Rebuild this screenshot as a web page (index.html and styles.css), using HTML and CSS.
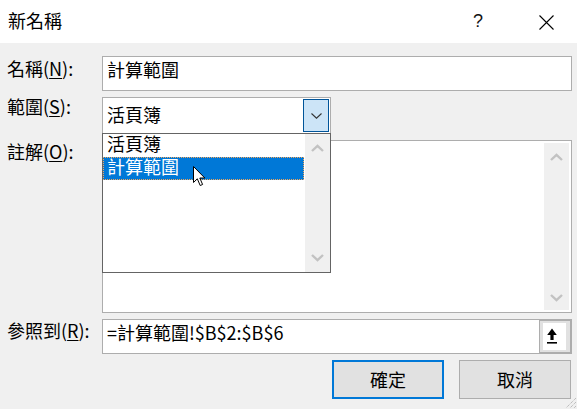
FILE: index.html
```html
<!DOCTYPE html>
<html lang="zh-Hant">
<head>
<meta charset="utf-8">
<title>新名稱</title>
<link rel="stylesheet" href="styles.css">
</head>
<body>
<div class="dialog">
  <div class="titlebar">
    <span class="title">新名稱</span>
    <span class="help">?</span>
    <svg class="close" width="15" height="15" viewBox="0 0 15 15"><path d="M0.5 0.5 L14.5 14.5 M14.5 0.5 L0.5 14.5" stroke="#000" stroke-width="1.1" fill="none"/></svg>
  </div>
  <div class="form">
    <div class="row">
      <label class="lbl">名稱(<u>N</u>):</label>
      <div class="field input"><span class="val">計算範圍</span></div>
    </div>
    <div class="row">
      <label class="lbl lbl-scope">範圍(<u>S</u>):</label>
      <div class="combo-wrap">
        <div class="combo">
          <span class="val">活頁簿</span>
          <span class="drop"><svg width="11" height="6" viewBox="0 0 11 6"><path d="M0.5 0.5 L5.5 5.2 L10.5 0.5" stroke="#333" stroke-width="1.1" fill="none"/></svg></span>
        </div>
        <div class="list">
          <div class="items">
            <div class="item">活頁簿</div>
            <div class="item sel">計算範圍</div>
          </div>
          <div class="vscroll vs-list">
            <svg width="13" height="8" viewBox="0 0 13 8"><path d="M1 7 L6.5 1.8 L12 7" stroke="#c2c2c2" stroke-width="2.4" fill="none"/></svg>
            <svg width="13" height="8" viewBox="0 0 13 8"><path d="M1 1 L6.5 6.2 L12 1" stroke="#c2c2c2" stroke-width="2.4" fill="none"/></svg>
          </div>
        </div>
      </div>
    </div>
    <div class="row">
      <label class="lbl lbl-adj">註解(<u>O</u>):</label>
      <div class="field textarea">
        <div class="vscroll vs-text">
          <svg width="13" height="8" viewBox="0 0 13 8"><path d="M1 7 L6.5 1.8 L12 7" stroke="#c2c2c2" stroke-width="2.4" fill="none"/></svg>
          <svg width="13" height="8" viewBox="0 0 13 8"><path d="M1 1 L6.5 6.2 L12 1" stroke="#c2c2c2" stroke-width="2.4" fill="none"/></svg>
        </div>
      </div>
    </div>
    <div class="row">
      <label class="lbl lbl-adj">參照到(<u>R</u>):</label>
      <div class="field ref">
        <span class="val">=計算範圍!$B$2:$B$6</span>
        <span class="refbtn"><span class="refinner"><svg width="23" height="27" viewBox="0 0 23 27"><path d="M9 5.5 L13.8 12 L10.6 12 L10.6 17 L7.4 17 L7.4 12 L4.2 12 Z" fill="#000"/><rect x="4" y="19" width="10" height="1.6" fill="#000"/></svg></span></span>
      </div>
    </div>
    <div class="buttons">
      <div class="btn default">確定</div>
      <div class="btn">取消</div>
    </div>
  </div>
  <svg class="cursor" width="14" height="21" viewBox="0 0 14 21"><path d="M0.5 0.5 L0.5 16.5 L4.3 12.8 L7.2 19.5 L9.6 18.5 L6.8 12 L11.8 12 Z" fill="#fff" stroke="#000" stroke-width="1" stroke-linejoin="miter"/></svg>
  <svg class="grip" width="12" height="12" viewBox="0 0 12 12"><path d="M11 1 L1 11 M11 5 L5 11 M11 9 L9 11" stroke="#a8a8a8" stroke-width="1" stroke-dasharray="1 1" fill="none"/></svg>
</div>
</body>
</html>
```
FILE: styles.css
```css
* { box-sizing: border-box; }
body {
  margin: 0;
  font-family: "Noto Sans CJK TC", "Noto Sans", sans-serif;
  font-size: 18px;
  color: #000;
}
.dialog {
  position: relative;
  width: 577px;
  height: 409px;
  background: #f0f0f0;
  overflow: hidden;
}
.titlebar {
  height: 43px;
  background: #fff;
  display: flex;
  align-items: flex-start;
  padding-right: 23px;
}
.title {
  flex: 1;
  padding: 8px 0 0 8px;
  line-height: 24px;
}
.help {
  width: 20px;
  text-align: center;
  padding-top: 9px;
  line-height: 24px;
  margin-right: 51px;
  font-family: "Liberation Sans", Arial, sans-serif;
  font-size: 18px;
  color: #111;
}
.close {
  display: block;
  margin-top: 15px;
}
.form {
  padding: 13px 5px 0 7px;
}
.row {
  display: flex;
  align-items: flex-start;
  margin-bottom: 6px;
}
.lbl {
  width: 95px;
  flex: none;
  line-height: 24px;
}
.lbl u { text-underline-offset: 2px; }
.lbl-scope { margin-top: -3px; }
.lbl-adj { margin-top: -1px; }
.field {
  flex: 1;
  border: 1px solid #adadad;
  background: #fff;
}
.input {
  height: 35px;
  padding: 0 4px;
  line-height: 24px;
}
.combo-wrap {
  position: relative;
  width: 229px;
  flex: none;
}
.combo {
  height: 37px;
  border: 1px solid #adadad;
  background: #fff;
  display: flex;
  align-items: flex-start;
}
.combo .val {
  flex: 1;
  padding: 4px 0 0 4px;
  line-height: 24px;
}
.drop {
  width: 26px;
  height: 33px;
  margin: 1px;
  border: 1px solid #005499;
  background: #cce4f7;
  display: flex;
  align-items: center;
  justify-content: center;
}
.drop svg { display: block; }
.list {
  position: absolute;
  top: 36px;
  left: 0;
  z-index: 2;
  width: 229px;
  height: 140px;
  border: 1px solid #646464;
  background: #fff;
  display: flex;
}
.items { flex: 1; }
.item {
  height: 23px;
  line-height: 19px;
  padding-left: 4px;
  margin-right: 1px;
  white-space: nowrap;
}
.item.sel {
  background: #0078d7;
  color: #fff;
  border: 1px dotted #f3a65a;
  padding-left: 3px;
  line-height: 17px;
}
.vscroll {
  width: 25px;
  flex: none;
  background: #f0f0f0;
  display: flex;
  flex-direction: column;
  justify-content: space-between;
  align-items: center;
}
.vscroll svg { display: block; }
.vs-list { padding: 10px 0 10px; }
.textarea {
  height: 173px;
  padding: 2px;
  display: flex;
  justify-content: flex-end;
}
.vs-text { padding: 10px 0 8px; }
.ref {
  height: 35px;
  display: flex;
  align-items: stretch;
  padding-left: 4px;
}
.ref .val {
  flex: 1;
  line-height: 24px;
}
.refbtn {
  width: 32px;
  flex: none;
  border: 1px solid #adadad;
  background: #e1e1e1;
  padding: 2px 4px 2px 3px;
}
.refinner {
  display: block;
  width: 100%;
  height: 100%;
  background: #fff;
}
.refinner svg { display: block; }
.buttons {
  display: flex;
  justify-content: flex-end;
  gap: 15px;
  padding-right: 1px;
}
.btn {
  width: 112px;
  height: 39px;
  background: #e1e1e1;
  border: 1px solid #adadad;
  display: flex;
  align-items: center;
  justify-content: center;
  line-height: 24px;
  padding-bottom: 2px;
}
.btn.default { border: 2px solid #0078d7; }
.cursor {
  position: absolute;
  left: 193px;
  top: 166px;
  z-index: 5;
}
.grip {
  position: absolute;
  right: 0;
  bottom: 0;
}
```
